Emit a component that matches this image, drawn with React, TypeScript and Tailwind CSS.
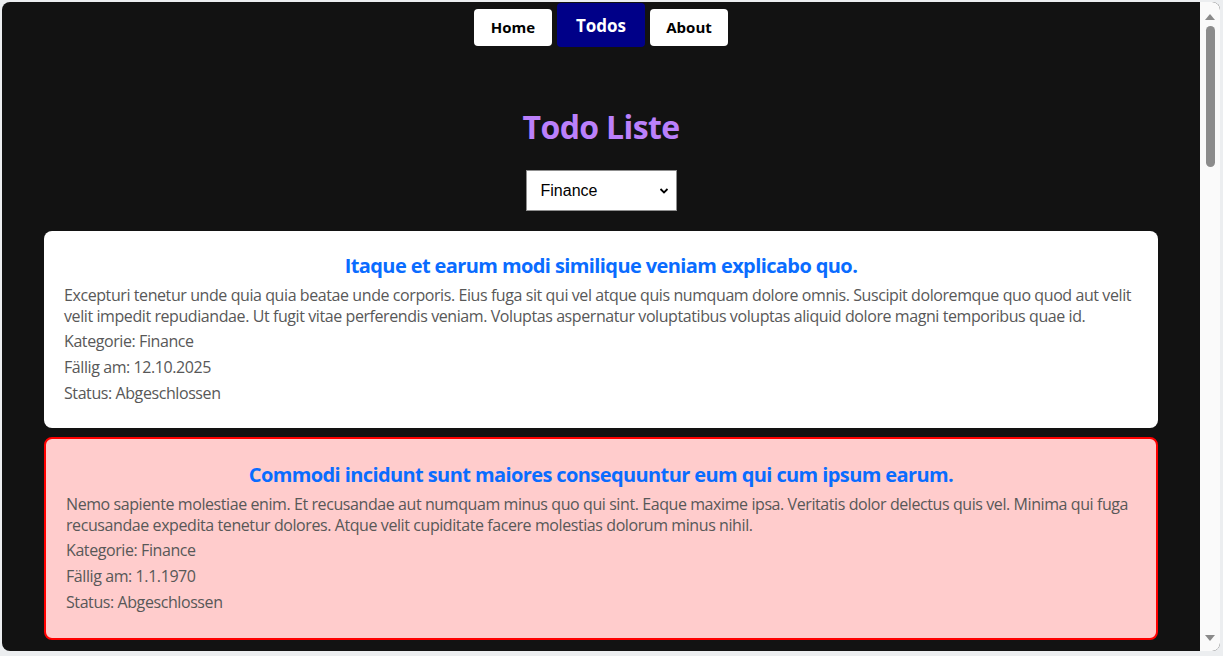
const todos = [
  {
    title: 'Itaque et earum modi similique veniam explicabo quo.',
    text: 'Excepturi tenetur unde quia quia beatae unde corporis. Eius fuga sit qui vel atque quis numquam dolore omnis. Suscipit doloremque quo quod aut velit velit impedit repudiandae. Ut fugit vitae perferendis veniam. Voluptas aspernatur voluptatibus voluptas aliquid dolore magni temporibus quae id.',
    category: 'Finance',
    due: '12.10.2025',
    overdue: false,
  },
  {
    title: 'Commodi incidunt sunt maiores consequuntur eum qui cum ipsum earum.',
    text: 'Nemo sapiente molestiae enim. Et recusandae aut numquam minus quo qui sint. Eaque maxime ipsa. Veritatis dolor delectus quis vel. Minima qui fuga recusandae expedita tenetur dolores. Atque velit cupiditate facere molestias dolorum minus nihil.',
    category: 'Finance',
    due: '1.1.1970',
    overdue: true,
  },
]

function TodoCard({ todo }: { todo: (typeof todos)[number] }) {
  return (
    <div
      className={
        todo.overdue
          ? 'rounded-lg border-2 border-[#ff0000] bg-[#ffcccc] px-5 pt-[24px] pb-[25px]'
          : 'rounded-lg bg-white px-5 pt-[23px] pb-[24px]'
      }
    >
      <h2 className="text-center text-[20px] leading-6 font-bold tracking-[-0.03em] text-[#0a6cff]">{todo.title}</h2>
      <div className="mt-[7px] text-[16px] leading-[21px] tracking-[-0.026em] text-[#585858]">
        <p>{todo.text}</p>
        <p className="mt-[4px]">Kategorie: {todo.category}</p>
        <p className="mt-[5px]">Fällig am: {todo.due}</p>
        <p className="mt-[5px]">Status: Abgeschlossen</p>
      </div>
    </div>
  )
}

export default function App() {
  return (
    <div className="h-[656px] w-[1223px] overflow-hidden bg-[#eceef0] pt-[2px] pl-[2px]" style={{ fontFamily: '"Open Sans", "Noto Sans", sans-serif' }}>
      <div className="flex h-[649px] w-[1218px] overflow-hidden rounded-lg bg-[#121212]">
        <div className="flex-1 overflow-hidden">
          <nav className="flex justify-center gap-[5px] pt-[1px]">
            <button className="mt-[6px] h-[37px] w-[78px] rounded bg-white text-[15px] font-bold text-black">Home</button>
            <button className="h-[44px] w-[88px] rounded bg-[#000088] pt-[1px] text-[17px] font-bold text-white">Todos</button>
            <button className="mt-[6px] h-[37px] w-[78px] rounded bg-white text-[15px] font-bold text-black">About</button>
          </nav>
          <h1 className="mt-[60px] text-center text-[32px] leading-10 font-bold tracking-[-0.02em] text-[#bb80fb]">Todo Liste</h1>
          <div className="mt-[23px] flex justify-center">
            <div className="flex h-[41px] w-[151px] items-center justify-between border border-[#8f8f8f] bg-white pr-[7px] pl-[14px] text-[16px] text-black" style={{ fontFamily: '"Liberation Sans", Arial, sans-serif' }}>
              <span>Finance</span>
              <svg width="10" height="10" viewBox="0 0 10 10">
                <path d="M1.5 3 L5 6.5 L8.5 3" fill="none" stroke="#000" strokeWidth="1.8" />
              </svg>
            </div>
          </div>
          <div className="mx-[42px] mt-[20px] flex flex-col gap-[9px]">
            {todos.map((t) => (
              <TodoCard key={t.title} todo={t} />
            ))}
          </div>
        </div>
        <div className="flex w-[20px] flex-col items-center bg-[#fafafa]">
          <svg width="10" height="6" viewBox="0 0 10 6" className="mt-[12px]">
            <path d="M0 6 L5 0 L10 6 Z" fill="#8a8a8a" />
          </svg>
          <div className="mt-[6px] h-[141px] w-[9px] rounded-full bg-[#8c8c8c]" />
          <div className="flex-1" />
          <svg width="10" height="6" viewBox="0 0 10 6" className="mb-[10px]">
            <path d="M0 0 L10 0 L5 6 Z" fill="#8a8a8a" />
          </svg>
        </div>
      </div>
    </div>
  )
}
